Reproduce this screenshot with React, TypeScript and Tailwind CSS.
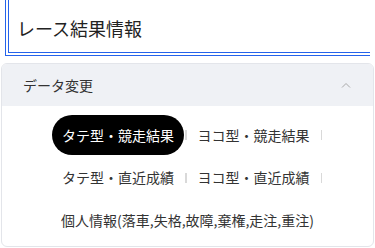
import { useState } from 'react';

const rows = [
  [
    { id: 'tate-result', label: 'タテ型・競走結果', sep: true },
    { id: 'yoko-result', label: 'ヨコ型・競走結果', sep: true },
  ],
  [
    { id: 'tate-recent', label: 'タテ型・直近成績', sep: true },
    { id: 'yoko-recent', label: 'ヨコ型・直近成績', sep: true },
  ],
  [{ id: 'personal', label: '個人情報(落車,失格,故障,棄権,走注,重注)', sep: false }],
];

export default function App() {
  const [active, setActive] = useState('tate-result');
  const [open, setOpen] = useState(true);

  return (
    <div
      className="w-[375px] h-[248px] bg-white overflow-hidden text-[#333]"
      style={{ fontFamily: '"Noto Sans CJK JP", "Noto Sans", sans-serif' }}
    >
      {/* Page Title */}
      <div className="mx-[5px] h-[56px] pt-[4px] pl-[8px] flex items-center border-l-4 border-b-4 border-double border-[#2563eb]">
        <h1 className="text-[18px] text-[#222] leading-none">レース結果情報</h1>
      </div>

      {/* Data switch panel */}
      <div className="mt-[7px] mx-[1px] border border-[#e3e5ea] rounded-md overflow-hidden">
        <button
          onClick={() => setOpen(!open)}
          className="w-full h-[42px] bg-[#eff1f5] pl-[21px] pr-[22px] flex items-center justify-between"
        >
          <span className="text-[14px] text-[#333]">データ変更</span>
          <svg className="w-[10px] h-[6px] text-[#a8a8a8]" viewBox="0 0 10 6" fill="none" stroke="currentColor">
            <path d="M1 5.5 L5 1.5 L9 5.5" strokeWidth={1} />
          </svg>
        </button>

        {open && (
          <div className="pt-[9px] pb-[6px] flex flex-col gap-[2.5px]">
            {rows.map((row, i) => (
              <div key={i} className="flex items-center justify-center">
                {row.map((item) => (
                  <div key={item.id} className="flex items-center">
                    <button
                      onClick={() => setActive(item.id)}
                      className={`h-[40px] px-[10px] rounded-full text-[14px] whitespace-nowrap ${
                        active === item.id ? 'bg-black text-white' : 'text-[#333]'
                      }`}
                    >
                      {item.label}
                    </button>
                    {item.sep && <span className="mx-[1px] w-[1.5px] h-[10px] bg-[#d9d9d9]" />}
                  </div>
                ))}
              </div>
            ))}
          </div>
        )}
      </div>
    </div>
  );
}
